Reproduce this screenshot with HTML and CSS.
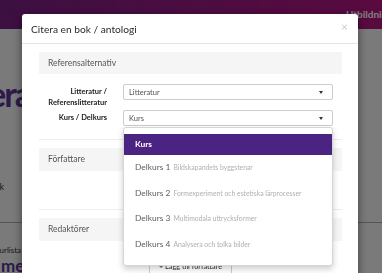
FILE: index.html
```html
<!DOCTYPE html>
<html lang="sv">
<head>
  <meta charset="UTF-8" />
  <meta name="viewport" content="width=device-width, initial-scale=1.0" />
  <title>Citera en bok / antologi</title>
  <link rel="stylesheet" href="styles.css">
</head>
<body>
  <div class="page">
    <header class="topbar">
      <span class="topnav">Utbildning</span>
    </header>
    <main class="page-main">
      <div class="edge title-edge"><h1 class="page-title">Referera</h1></div>
      <div class="edge text-edge"><p class="page-text">Referera till en bok</p></div>
      <hr class="page-rule">
      <div class="edge small-edge"><p class="page-small">Litteraturlista</p></div>
      <div class="edge sub-edge"><h2 class="page-sub">Mål med</h2></div>
    </main>
  </div>

  <div class="backdrop"></div>

  <div class="modal">
    <div class="modal-header">
      <h4 class="modal-title">Citera en bok / antologi</h4>
      <span class="close">&times;</span>
    </div>
    <div class="modal-body">

      <div class="panel">
        <div class="panel-heading">Referensalternativ</div>
        <div class="panel-body form">
          <label class="form-label">Litteratur /<br>Referenslitteratur</label>
          <div class="select">
            <span>Litteratur</span>
            <span class="caret"></span>
          </div>

          <label class="form-label">Kurs / Delkurs</label>
          <div class="select open">
            <span>Kurs</span>
            <span class="caret"></span>
            <ul class="dropdown">
              <li class="item active">Kurs</li>
              <li class="item">Delkurs 1 <small>Bildskapandets byggstenar</small></li>
              <li class="item">Delkurs 2 <small>Formexperiment och estetiska lärprocesser</small></li>
              <li class="item">Delkurs 3 <small>Multimodala uttrycksformer</small></li>
              <li class="item">Delkurs 4 <small>Analysera och tolka bilder</small></li>
            </ul>
          </div>
        </div>
      </div>

      <div class="panel">
        <div class="panel-heading">Författare</div>
        <div class="panel-body empty"></div>
      </div>

      <div class="panel">
        <div class="panel-heading">Redaktörer</div>
        <div class="panel-body center">
          <button class="btn"><b>+</b> Lägg till författare</button>
        </div>
      </div>

    </div>
  </div>
</body>
</html>
```

FILE: styles.css
```css
* { box-sizing: border-box; }
body { margin: 0; font-family: Lato, "Open Sans", sans-serif; color: #333; background: #f4f4f4; overflow: hidden; height: 273px; }

/* page behind the modal */
.page { height: 273px; overflow: hidden; }
.topbar { height: 29px; background: linear-gradient(90deg, #7a2084, #b4147f); display: flex; align-items: center; padding: 0 0 1px 346px; overflow: hidden; }
.topnav { color: #fff; font-weight: bold; font-size: 10px; white-space: nowrap; }
.page-main { padding-top: 51px; }
.edge { display: flex; justify-content: flex-end; white-space: nowrap; }
.edge > * { margin: 0; flex-shrink: 0; }
.title-edge { width: 30px; height: 28px; }
.page-title { font-size: 34px; line-height: 28px; letter-spacing: -2px; color: #5a3598; font-weight: bold; }
.text-edge { width: 4px; margin-top: 73px; }
.page-text { font-size: 9px; line-height: 12px; color: #333; }
.page-rule { border: 0; border-top: 1px solid #aaa; margin: 29px 0 0; }
.small-edge { width: 21px; margin-top: 22px; }
.page-small { font-size: 8px; line-height: 10px; }
.sub-edge { width: 34px; margin-top: 2px; }
.page-sub { font-size: 17px; line-height: 18px; color: #5a3598; font-weight: bold; }

.backdrop { position: fixed; inset: 0; background: rgba(0, 0, 0, 0.5); }

/* modal */
.modal { position: absolute; left: 22px; top: 14px; width: 336px; height: 300px; background: #fff; border-radius: 3px; box-shadow: 0 3px 9px rgba(0, 0, 0, 0.5); }
.modal-header { height: 30px; padding: 0 9px; display: flex; align-items: center; justify-content: space-between; border-bottom: 1px solid #e5e5e5; }
.modal-title { margin: 0; font-size: 10.2px; font-weight: normal; color: #2a2a2a; }
.close { color: #ccc; font-size: 12px; margin-top: -4px; margin-right: 1px; }
.modal-body { padding: 8px 16px 0 17px; }

.panel { margin-bottom: 8px; }
.panel-heading { height: 22px; line-height: 22px; padding-left: 9px; background: #f5f5f5; font-size: 8.5px; color: #555; }
.panel:nth-child(n+2) .panel-heading { height: 23px; line-height: 23px; }
.panel-body { border-bottom: 1px solid #eee; }
.empty { height: 39px; }
.center { display: flex; justify-content: center; padding-top: 17px; border-bottom: 0; }

.form { display: grid; grid-template-columns: 68px 210px; grid-auto-rows: 16px; column-gap: 16px; row-gap: 10px; padding: 10px 0 13px; }
.form-label { font-size: 7.5px; font-weight: bold; line-height: 11px; text-align: right; padding-top: 2px; color: #222; white-space: nowrap; }

.select { position: relative; height: 16px; border: 1px solid #ccc; border-radius: 2px; padding: 0 5px; display: flex; align-items: center; justify-content: space-between; font-size: 7.5px; color: #555; }
.caret { width: 0; height: 0; border-left: 2.5px solid transparent; border-right: 2.5px solid transparent; border-top: 3px solid #333; margin-right: 4px; }

.dropdown { position: absolute; left: -1px; right: -1px; top: 16px; margin: 0; padding: 6px 0 8px; list-style: none; background: #fff; border: 1px solid #d5d5d5; border-radius: 3px; box-shadow: 0 3px 6px rgba(0, 0, 0, 0.2); z-index: 2; }
.item { height: 25.5px; line-height: 25.5px; padding-left: 11px; font-size: 8.4px; color: #5e5e5e; white-space: nowrap; }
.item small { font-size: 6.8px; color: #b0b0b0; margin-left: 1px; }
.item.active { height: 21px; line-height: 21px; background: #4b2382; color: #fff; font-weight: bold; }

.btn { font-family: inherit; font-size: 7.3px; color: #333; background: #fff; border: 1px solid #ccc; border-radius: 2px; padding: 0 9px; height: 17px; }
```
